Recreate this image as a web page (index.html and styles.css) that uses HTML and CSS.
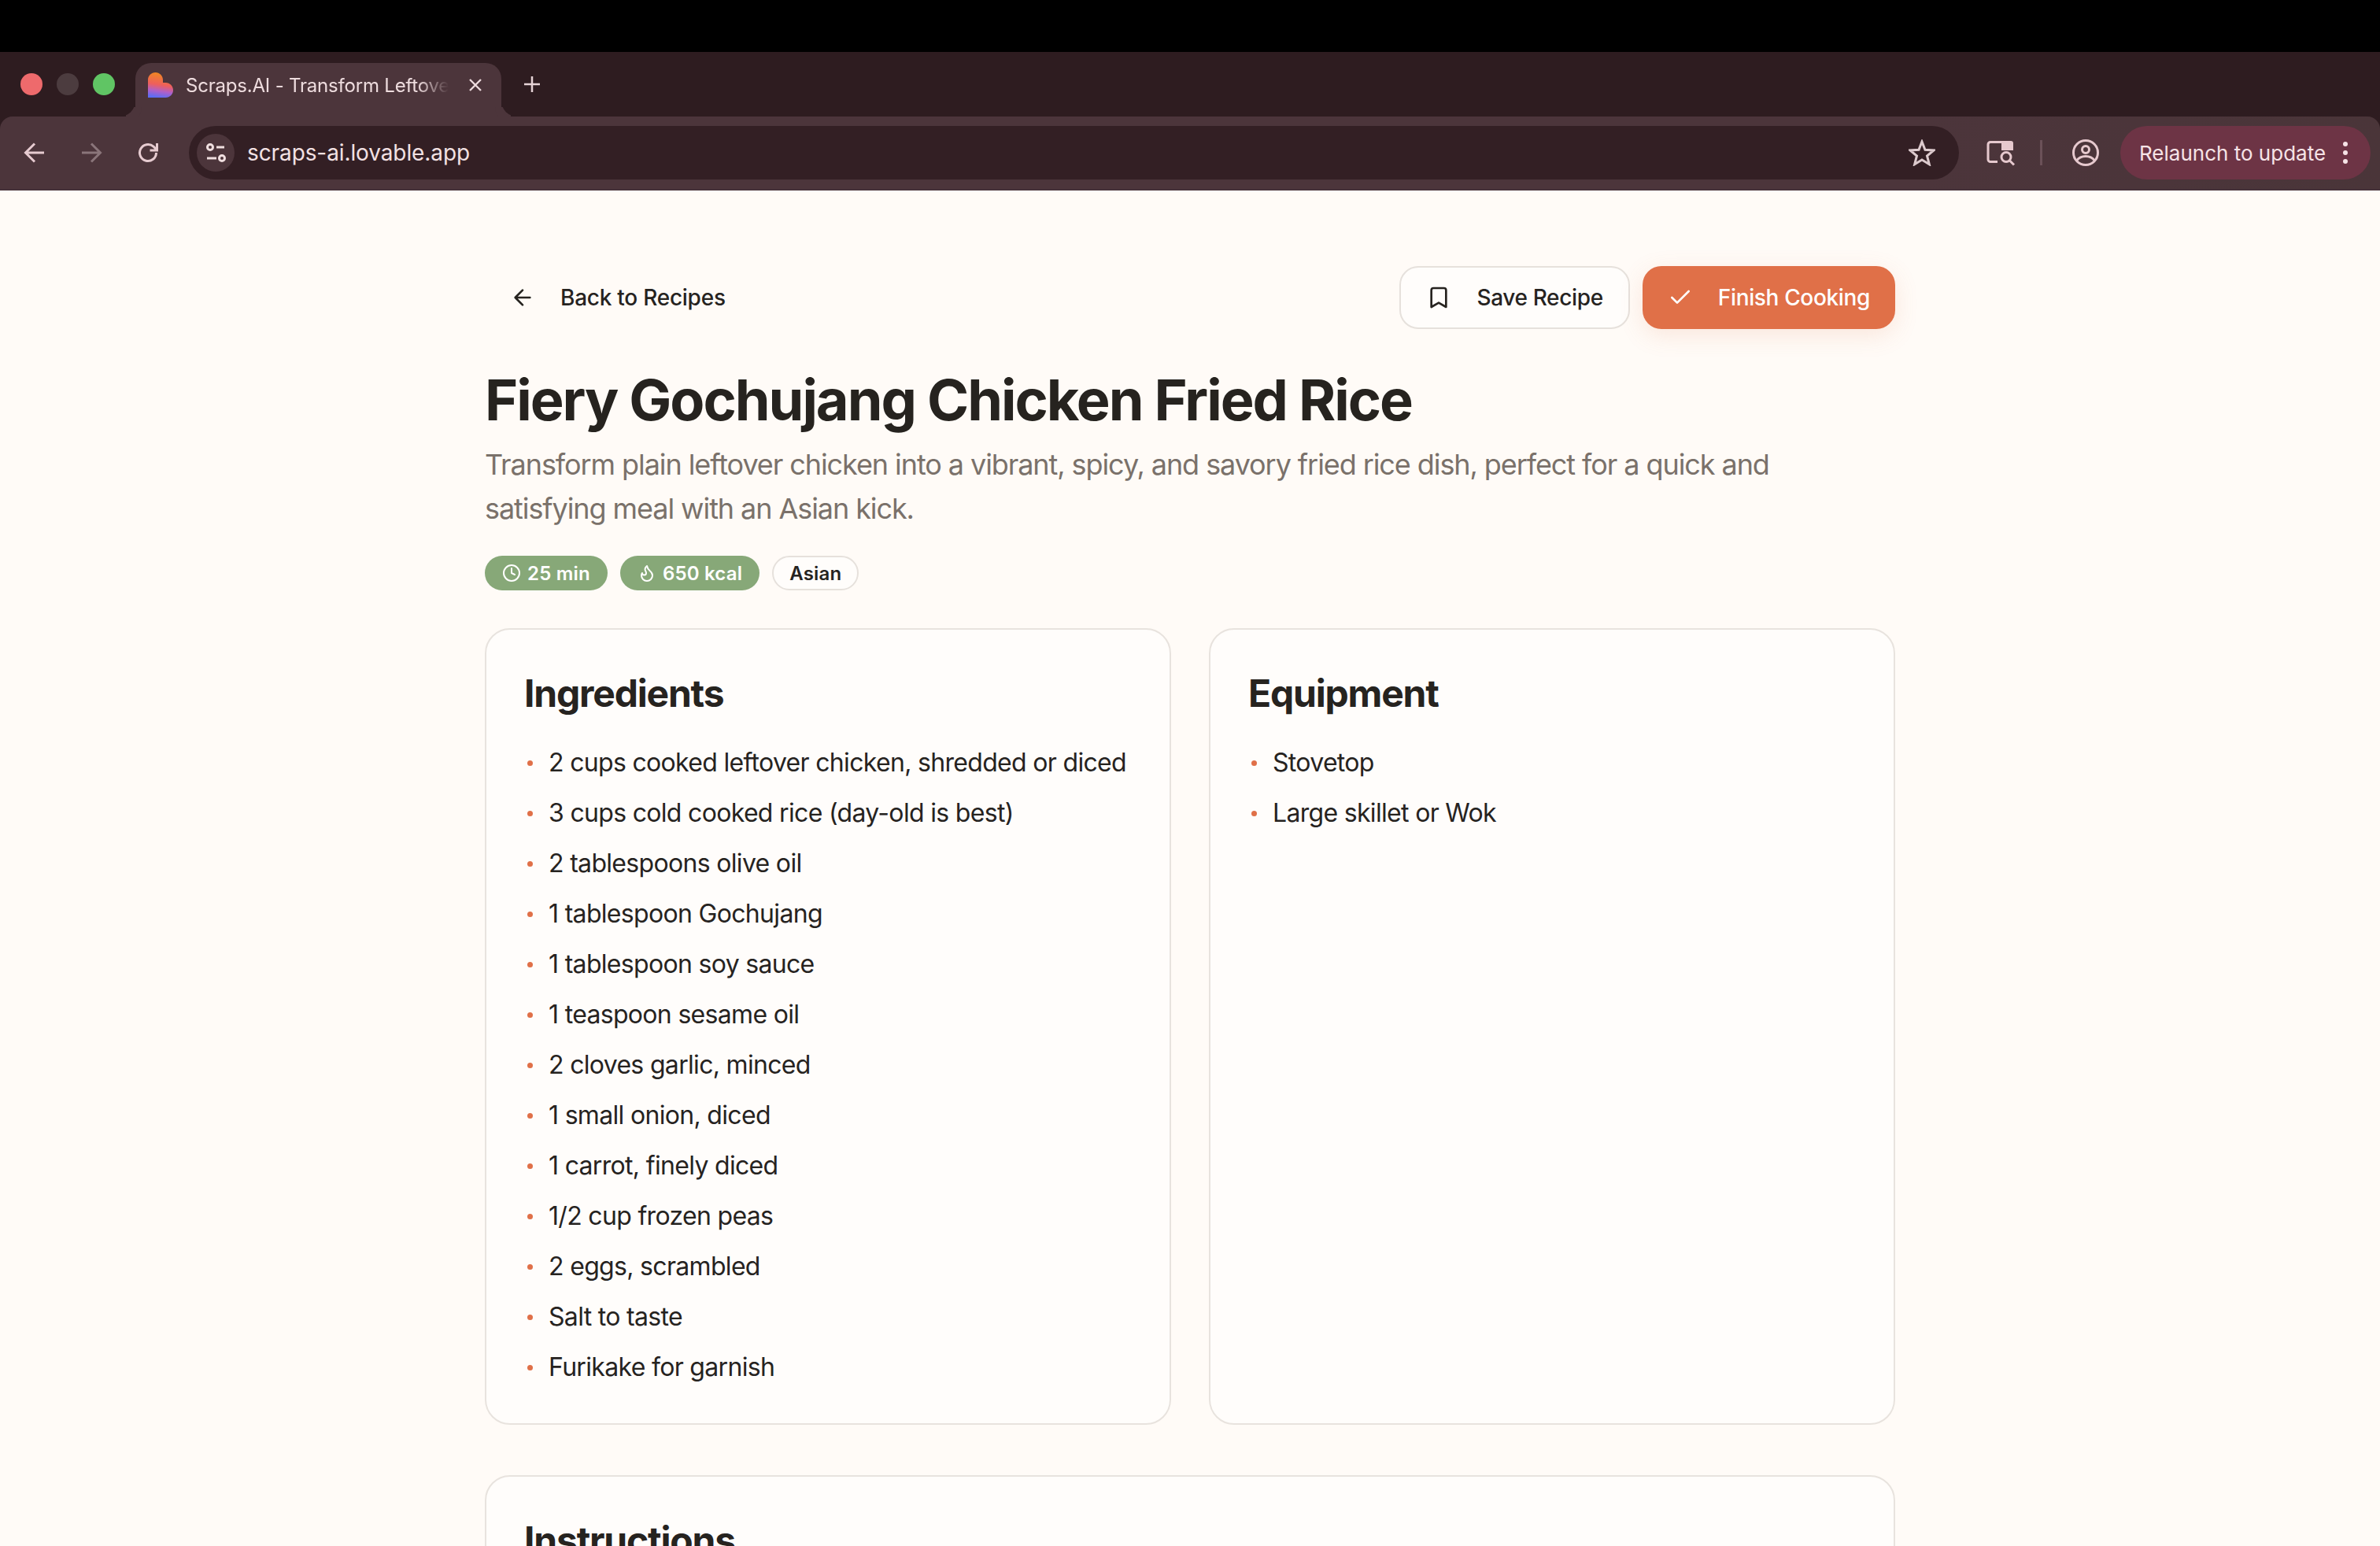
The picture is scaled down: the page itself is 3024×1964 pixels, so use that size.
FILE: index.html
```html
<!DOCTYPE html>
<html lang="en">
<head>
  <meta charset="UTF-8" />
  <title>Scraps.AI - Transform Leftovers</title>
  <link rel="stylesheet" href="styles.css">
</head>
<body>
  <div class="screen">
    <div class="top-black"></div>

    <!-- browser tabs -->
    <div class="tab-strip">
      <div class="lights">
        <span class="light red"></span>
        <span class="light grey"></span>
        <span class="light green"></span>
      </div>
      <div class="tab">
        <svg class="favicon" width="32" height="32" viewBox="0 0 32 32">
          <defs>
            <linearGradient id="fav" x1="0.6" y1="0" x2="0.45" y2="1">
              <stop offset="0" stop-color="#f08a1c" />
              <stop offset="0.5" stop-color="#ee5f5c" />
              <stop offset="0.75" stop-color="#b060c8" />
              <stop offset="1" stop-color="#5c6cf5" />
            </linearGradient>
          </defs>
          <path fill="url(#fav)" d="M9.500 0c5.300 0 9.500 4.300 9.500 9.500V13h3.500c5.300 0 9.500 4.300 9.500 9.500S27.800 32 22.500 32H0V9.500C0 4.300 4.200 0 9.500 0z" />
        </svg>
        <span class="tab-title">Scraps.AI - Transform Leftovers</span>
        <svg class="tab-close" width="20" height="20" viewBox="0 0 20 20"><path d="M3 3l14 14M17 3L3 17" /></svg>
      </div>
      <svg class="new-tab" width="24" height="24" viewBox="0 0 24 24"><path d="M12 2v20M2 12h20" /></svg>
    </div>

    <!-- browser toolbar -->
    <div class="toolbar">
      <svg class="nav-icon" width="32" height="32" viewBox="0 0 32 32"><path d="M28 16H6M16 4.500L4.500 16 16 27.500" /></svg>
      <svg class="nav-icon dim" width="32" height="32" viewBox="0 0 32 32"><path d="M4 16h22M16 4.500L27.500 16 16 27.500" /></svg>
      <svg class="nav-icon" width="32" height="32" viewBox="0 0 32 32"><path d="M26.500 16A10.500 10.500 0 1 1 23 8.200L27 12M27.500 4v9h-9" /></svg>
      <div class="omnibox">
        <span class="site-btn">
          <svg width="28" height="28" viewBox="0 0 28 28" class="site-icon">
            <circle cx="7" cy="7" r="3.500" />
            <path d="M15 7h10M3 21h12" />
            <circle cx="22" cy="21" r="3.500" />
          </svg>
        </span>
        <span class="url">scraps-ai.lovable.app</span>
        <svg class="star" width="34" height="34" viewBox="0 0 34 34"><path d="M17 3l4 10.300 11 .7-8.500 7 2.800 10.700L17 26l-9.300 5.700L10.500 21 2 14l11-.7z" /></svg>
      </div>
      <svg class="panel-icon" width="38" height="34" viewBox="0 0 38 34">
        <path class="panel-line" d="M19 3.500H5a3 3 0 0 0-3 3v19a3 3 0 0 0 3 3h9" />
        <path class="panel-fill" d="M19 2h12a3 3 0 0 1 3 3v9H19z" />
        <circle class="panel-line" cx="25" cy="22.500" r="6" />
        <path class="panel-line" d="M29.500 27L35 32.500" />
      </svg>
      <span class="bar-divider"></span>
      <svg class="profile-icon" width="34" height="34" viewBox="0 0 34 34">
        <circle cx="17" cy="17" r="15.500" />
        <circle cx="17" cy="13" r="4.500" />
        <path d="M5.500 27c3-4 7-5.500 11.500-5.500s8.500 1.500 11.500 5.500" />
      </svg>
      <div class="relaunch">
        <span>Relaunch to update</span>
        <span class="kebab"><i></i><i></i><i></i></span>
      </div>
    </div>

    <!-- page -->
    <div class="page-bg">
      <main class="page">
        <div class="actions">
          <button class="btn ghost">
            <svg class="lucide" width="32" height="32" viewBox="0 0 24 24"><path d="M19 12H5M12 19l-7-7 7-7" /></svg>
            Back to Recipes
          </button>
          <div class="actions-right">
            <button class="btn outline">
              <svg class="lucide" width="32" height="32" viewBox="0 0 24 24"><path d="M19 21l-7-4-7 4V5a2 2 0 0 1 2-2h10a2 2 0 0 1 2 2v16z" /></svg>
              Save Recipe
            </button>
            <button class="btn primary">
              <svg class="lucide" width="32" height="32" viewBox="0 0 24 24"><path d="M20 6L9 17l-5-5" /></svg>
              Finish Cooking
            </button>
          </div>
        </div>

        <h1 class="recipe-title">Fiery Gochujang Chicken Fried Rice</h1>
        <p class="recipe-desc">Transform plain leftover chicken into a vibrant, spicy, and savory fried rice dish, perfect for a quick and satisfying meal with an Asian kick.</p>

        <div class="badges">
          <span class="badge green">
            <svg class="lucide" width="24" height="24" viewBox="0 0 24 24"><circle cx="12" cy="12" r="10" /><path d="M12 6v6l4 2" /></svg>
            25 min
          </span>
          <span class="badge green">
            <svg class="lucide" width="24" height="24" viewBox="0 0 24 24"><path d="M8.500 14.500A2.500 2.500 0 0 0 11 12c0-1.380-.5-2-1-3-1.072-2.143-.224-4.054 2-6 .5 2.500 2 4.900 4 6.500 2 1.600 3 3.500 3 5.500a7 7 0 1 1-14 0c0-1.153.433-2.294 1-3a2.500 2.500 0 0 0 2.500 2.500z" /></svg>
            650 kcal
          </span>
          <span class="badge plain">Asian</span>
        </div>

        <div class="columns">
          <section class="card">
            <h2>Ingredients</h2>
            <ul class="items">
              <li>2 cups cooked leftover chicken, shredded or diced</li>
              <li>3 cups cold cooked rice (day-old is best)</li>
              <li>2 tablespoons olive oil</li>
              <li>1 tablespoon Gochujang</li>
              <li>1 tablespoon soy sauce</li>
              <li>1 teaspoon sesame oil</li>
              <li>2 cloves garlic, minced</li>
              <li>1 small onion, diced</li>
              <li>1 carrot, finely diced</li>
              <li>1/2 cup frozen peas</li>
              <li>2 eggs, scrambled</li>
              <li>Salt to taste</li>
              <li>Furikake for garnish</li>
            </ul>
          </section>
          <section class="card">
            <h2>Equipment</h2>
            <ul class="items">
              <li>Stovetop</li>
              <li>Large skillet or Wok</li>
            </ul>
          </section>
        </div>

        <section class="card instructions">
          <h2>Instructions</h2>
        </section>
      </main>
    </div>
  </div>
</body>
</html>
```

FILE: styles.css
```css
* {
  box-sizing: border-box;
}

html, body {
  margin: 0;
  height: 100%;
  overflow: hidden;
}

body {
  font-family: Inter, "Liberation Sans", sans-serif;
  color: #26231f;
}

.screen {
  height: 1964px;
  display: flex;
  flex-direction: column;
  overflow: hidden;
  background: #2e1c20;
}

.top-black {
  height: 66px;
  flex: none;
  background: #000;
}

/* Browser tab strip */
.tab-strip {
  height: 82px;
  flex: none;
  background: #2e1c20;
  display: flex;
  align-items: flex-end;
  padding-left: 26px;
}

.lights {
  display: flex;
  gap: 18px;
  align-self: flex-start;
  margin-top: 27px;
}

.light {
  width: 28px;
  height: 28px;
  border-radius: 50%;
}

.light.red { background: #ee6a6c; }
.light.grey { background: #4c3c3f; }
.light.green { background: #60c564; }

.tab {
  position: relative;
  width: 465px;
  height: 68px;
  margin-left: 26px;
  padding: 0 24px 12px 16px;
  display: flex;
  align-items: center;
  background: #4c353b;
  border-radius: 20px 20px 0 0;
}

.tab::before,
.tab::after {
  content: "";
  position: absolute;
  bottom: 0;
  width: 20px;
  height: 20px;
  background: #2e1c20;
}

.tab::before {
  left: -20px;
  border-bottom-right-radius: 20px;
  box-shadow: 8px 8px 0 #4c353b;
}

.tab::after {
  right: -20px;
  border-bottom-left-radius: 20px;
  box-shadow: -8px 8px 0 #4c353b;
}

.favicon {
  flex: none;
}

.tab-title {
  margin-left: 16px;
  width: 334px;
  flex: none;
  font-size: 24px;
  letter-spacing: -0.2px;
  color: #eedcde;
  white-space: nowrap;
  overflow: hidden;
  -webkit-mask-image: linear-gradient(to right, #000 88%, transparent 100%);
  mask-image: linear-gradient(to right, #000 88%, transparent 100%);
}

.tab-close {
  flex: none;
  margin-left: 24px;
  fill: none;
  stroke: #eedcde;
  stroke-width: 2.400;
}

.new-tab {
  align-self: flex-start;
  margin: 29px 0 0 27px;
  fill: none;
  stroke: #e6d3d6;
  stroke-width: 2.500;
}

/* Browser toolbar */
.toolbar {
  height: 94px;
  flex: none;
  background: linear-gradient(to right, #4c353b 80%, #4a3539);
  border-radius: 16px 16px 0 0;
  border-bottom: 2px solid #46323a;
  display: flex;
  align-items: center;
  padding: 0 12px 0 28px;
  position: relative;
  z-index: 1;
}

.nav-icon {
  flex: none;
  margin-right: 40px;
  fill: none;
  stroke: #e6cbd0;
  stroke-width: 3;
}

.nav-icon.dim {
  stroke: #8a757a;
}

.nav-icon:nth-of-type(3) {
  margin-right: 36px;
}

.omnibox {
  flex: 1;
  height: 68px;
  background: #331f24;
  border-radius: 34px;
  display: flex;
  align-items: center;
  padding: 0 30px 0 10px;
}

.site-btn {
  width: 48px;
  height: 48px;
  border-radius: 50%;
  background: #4c353b;
  display: flex;
  align-items: center;
  justify-content: center;
}

.site-icon {
  fill: none;
  stroke: #f0dfe0;
  stroke-width: 3;
}

.url {
  flex: 1;
  margin-left: 16px;
  font-size: 28px;
  letter-spacing: -0.1px;
  color: #f2e1e3;
}

.star {
  fill: none;
  stroke: #dccacd;
  stroke-width: 3;
}

.panel-icon {
  flex: none;
  margin-left: 35px;
}

.panel-line {
  fill: none;
  stroke: #e6c9ce;
  stroke-width: 3;
}

.panel-fill {
  fill: #e6c9ce;
}

.bar-divider {
  width: 3px;
  height: 32px;
  margin-left: 30px;
  background: #6b5158;
}

.profile-icon {
  flex: none;
  margin-left: 38px;
  fill: none;
  stroke: #e6c9ce;
  stroke-width: 3;
}

.relaunch {
  width: 318px;
  height: 68px;
  margin-left: 27px;
  padding: 0 24px;
  border-radius: 34px;
  background: #6d3445;
  color: #f6e3e6;
  font-size: 26px;
  display: flex;
  align-items: center;
  justify-content: space-between;
}

.kebab {
  display: flex;
  flex-direction: column;
  gap: 5px;
  margin-right: 5px;
}

.kebab i {
  width: 6px;
  height: 6px;
  border-radius: 50%;
  background: #f6e3e6;
}

/* Recipe page */
.page-bg {
  flex: 1;
  background: #fffbf7;
}

.page {
  width: 1792px;
  margin: 0 auto;
  padding-top: 96px;
}

.lucide {
  flex: none;
  fill: none;
  stroke: currentColor;
  stroke-width: 2;
  stroke-linecap: round;
  stroke-linejoin: round;
}

.actions {
  display: flex;
  justify-content: space-between;
  align-items: center;
}

.actions-right {
  display: flex;
  gap: 16px;
}

.btn {
  height: 80px;
  padding: 0 32px;
  display: inline-flex;
  align-items: center;
  gap: 32px;
  font-family: inherit;
  font-size: 28px;
  font-weight: 500;
  letter-spacing: -0.35px;
  border-radius: 24px;
  border: none;
  background: transparent;
  color: #26231f;
}

.btn.ghost {
  letter-spacing: -0.25px;
}

.btn.outline {
  border: 2px solid #e6e1dc;
  background: #fffdfb;
}

.btn.primary {
  background: #e07048;
  color: #fff;
  box-shadow: 0 8px 30px rgba(224, 112, 72, 0.15);
}

.recipe-title {
  margin: 50px 0 0;
  font-size: 72px;
  line-height: 80px;
  font-weight: 700;
  letter-spacing: -2.030px;
}

.recipe-desc {
  max-width: 1680px;
  margin: 14px 0 0;
  font-size: 36px;
  line-height: 56px;
  letter-spacing: -1.080px;
  color: #7a716a;
}

.badges {
  display: flex;
  gap: 16px;
  margin-top: 32px;
}

.badge {
  height: 44px;
  padding: 0 22px;
  display: inline-flex;
  align-items: center;
  gap: 8px;
  border-radius: 22px;
  font-size: 24px;
  font-weight: 600;
  letter-spacing: 0.2px;
}

.badge.green {
  background: #87a878;
  color: #fff;
}

.badge.plain {
  padding: 0 20px;
  border: 2px solid #e6e1dc;
  background: #fffdfb;
}

.columns {
  display: grid;
  grid-template-columns: 1fr 1fr;
  gap: 48px;
  margin-top: 48px;
}

.card {
  padding: 48px 48px 47px;
  border: 2px solid #e8e3de;
  border-radius: 32px;
  background: #fffdfb;
}

.card h2 {
  margin: 0;
  font-size: 48px;
  line-height: 66px;
  font-weight: 700;
  letter-spacing: -1.200px;
}

.items {
  list-style: none;
  margin: 31px 0 0;
  padding: 0;
  display: flex;
  flex-direction: column;
  gap: 16px;
}

.items li {
  display: flex;
  align-items: center;
  gap: 20px;
  font-size: 32px;
  line-height: 48px;
  letter-spacing: -0.68px;
}

.items li::before {
  content: "";
  flex: none;
  width: 7px;
  height: 7px;
  margin-left: 4px;
  border-radius: 50%;
  background: #e07048;
}

.instructions {
  margin-top: 64px;
}
```
